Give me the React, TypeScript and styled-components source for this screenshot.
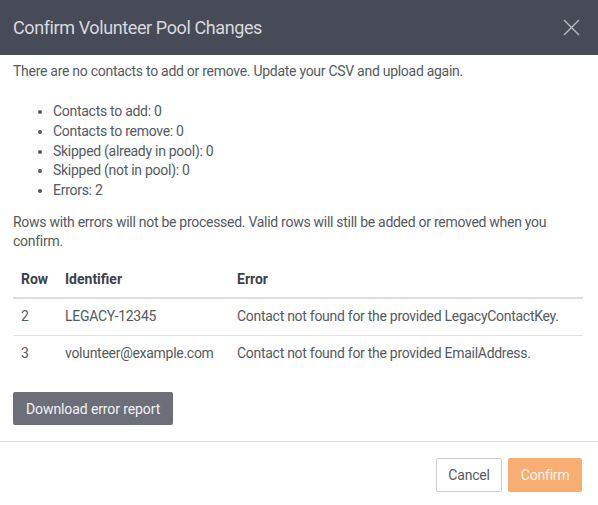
import React from "react";
import styled, { createGlobalStyle } from "styled-components";

const Global = createGlobalStyle`
  html, body { margin: 0; padding: 0; background: #ffffff; }
  body { font-family: Roboto, "Liberation Sans", sans-serif; }
`;

const Modal = styled.div`
  width: 598px;
  height: 505px;
  display: flex;
  flex-direction: column;
  background: #fff;
  color: #555a61;
  font-size: 14px;
  letter-spacing: -0.28px;
`;

const Header = styled.header`
  height: 55px;
  flex: none;
  box-sizing: border-box;
  background: #474b57;
  display: flex;
  align-items: center;
  justify-content: space-between;
  padding: 0 18px 0 13px;
`;

const Title = styled.h1`
  margin: 0 0 1px;
  font-size: 18px;
  font-weight: 400;
  letter-spacing: -0.4px;
  color: #d9dade;
`;

const CloseButton = styled.button`
  border: 0;
  background: none;
  padding: 0;
  width: 17px;
  height: 17px;
  display: flex;
  align-items: center;
  justify-content: center;
  cursor: pointer;
`;

const Body = styled.div`
  padding: 6px 15px 16px 13px;
  border-bottom: 1px solid #e2e2e2;
`;

const Text = styled.p<{ $gap?: number }>`
  margin: ${(p) => p.$gap ?? 0}px 0 0;
  line-height: ${(p) => (p.$gap ? 19 : 20)}px;
`;

const List = styled.ul`
  margin: 21px 0 0;
  padding-left: 40px;
  line-height: 19.75px;
`;

const Table = styled.table`
  width: 100%;
  border-collapse: collapse;
  margin-top: 10px;
  line-height: 19px;
`;

const Th = styled.th<{ $w?: number }>`
  text-align: left;
  font-weight: 700;
  letter-spacing: 0;
  color: #3e424a;
  padding: 9px 8px 8px;
  border-bottom: 2px solid #dedede;
  width: ${(p) => (p.$w ? `${p.$w}px` : "auto")};
  box-sizing: border-box;
`;

const Td = styled.td`
  padding: 7.5px 8px 9.5px;
  border-bottom: 1px solid #e2e2e2;
  tr:last-child > & { border-bottom: 0; }
`;

const SecondaryButton = styled.button`
  display: block;
  margin-top: 20px;
  font-family: inherit;
  font-size: 14px;
  letter-spacing: -0.1px;
  background: #6c6e79;
  color: #f2f2f4;
  border: 0;
  border-radius: 2px;
  height: 33px;
  padding: 0 13px;
  cursor: pointer;
`;

const Footer = styled.footer`
  display: flex;
  justify-content: flex-end;
  gap: 6px;
  padding: 16px 16px 0 0;
`;

const FooterButton = styled.button<{ $primary?: boolean }>`
  font-family: inherit;
  font-size: 14px;
  letter-spacing: -0.2px;
  height: 34px;
  padding: 0 ${(p) => (p.$primary ? 11.5 : 11.5)}px;
  border-radius: 2px;
  cursor: pointer;
  background: ${(p) => (p.$primary ? "#f8ad72" : "#ffffff")};
  color: ${(p) => (p.$primary ? "#fff6ee" : "#555a61")};
  border: 1px solid ${(p) => (p.$primary ? "#f8ad72" : "#cfcfcf")};
`;

const rows = [
  { row: "2", id: "LEGACY-12345", error: "Contact not found for the provided LegacyContactKey." },
  { row: "3", id: "volunteer@example.com", error: "Contact not found for the provided EmailAddress." },
];

export default function App() {
  return (
    <>
      <Global />
      <Modal>
        <Header>
          <Title>Confirm Volunteer Pool Changes</Title>
          <CloseButton aria-label="Close">
            <svg width="17" height="17" viewBox="0 0 17 17">
              <path d="M1 1 L16 16 M16 1 L1 16" stroke="#b9bbc1" strokeWidth="1.4" fill="none" />
            </svg>
          </CloseButton>
        </Header>
        <Body>
          <Text>There are no contacts to add or remove. Update your CSV and upload again.</Text>
          <List>
            <li>Contacts to add: 0</li>
            <li>Contacts to remove: 0</li>
            <li>Skipped (already in pool): 0</li>
            <li>Skipped (not in pool): 0</li>
            <li>Errors: 2</li>
          </List>
          <Text $gap={12.5}>
            Rows with errors will not be processed. Valid rows will still be added or removed when you
            confirm.
          </Text>
          <Table>
            <thead>
              <tr>
                <Th $w={44}>Row</Th>
                <Th $w={172}>Identifier</Th>
                <Th>Error</Th>
              </tr>
            </thead>
            <tbody>
              {rows.map((r) => (
                <tr key={r.row}>
                  <Td>{r.row}</Td>
                  <Td>{r.id}</Td>
                  <Td>{r.error}</Td>
                </tr>
              ))}
            </tbody>
          </Table>
          <SecondaryButton>Download error report</SecondaryButton>
        </Body>
        <Footer>
          <FooterButton>Cancel</FooterButton>
          <FooterButton $primary>Confirm</FooterButton>
        </Footer>
      </Modal>
    </>
  );
}
